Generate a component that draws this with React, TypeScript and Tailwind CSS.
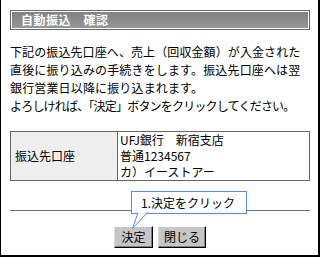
import React from 'react';

const App: React.FC = () => {
  return (
    <div className="relative w-[320px] h-[257px] overflow-hidden bg-white border-l border-r-2 border-b-2 border-black pl-[9px] pt-[10px] font-['Noto_Sans_CJK_JP',sans-serif] text-[12px] text-black">
      <div className="w-[300px] flex flex-col">
        {/* Title bar */}
        <div className="h-[20px] border border-[#666666] p-px bg-white">
          <div className="h-full flex items-center pl-[9px] bg-[radial-gradient(circle,#9a9a9a_0.6px,transparent_0.9px),linear-gradient(to_bottom,#545454,#8e8e8e)] bg-[length:2px_2px,100%_100%]">
            <span className="text-white font-bold leading-none tracking-[0.5px]">自動振込　確認</span>
          </div>
        </div>

        {/* Message */}
        <div className="mt-[13px] leading-[18px] whitespace-nowrap">
          <div className="tracking-[0.1px]">下記の振込先口座へ、売上（回収金額）が入金された</div>
          <div className="tracking-[0.15px]">直後に振り込みの手続きをします。振込先口座へは翌</div>
          <div className="tracking-[0.15px]">銀行営業日以降に振り込まれます。</div>
          <div className="tracking-[-0.8px]">よろしければ、「決定」ボタンをクリックしてください。</div>
        </div>

        {/* Account table */}
        <div className="mt-[16px] h-[50px] flex border border-[#666666]">
          <div className="w-[107px] shrink-0 flex items-center pl-[4px] bg-[#eeeeee] border-r border-[#666666]">
            振込先口座
          </div>
          <div className="flex-1 pl-[2px] leading-[16px] whitespace-nowrap">
            <div>UFJ銀行　新宿支店</div>
            <div>普通1234567</div>
            <div>カ）イーストアー</div>
          </div>
        </div>

        <div className="mt-[29px] border-t border-[#6e6e6e]" />

        {/* Buttons */}
        <div className="mt-[15px] flex justify-center gap-[5px]">
          <button className="w-[39px] h-[22px] flex items-center justify-center bg-[#c6c6c6] border border-t-white border-l-[#dcdcdc] border-r-black border-b-black shadow-[inset_-1px_-1px_0_#808080] leading-none">
            決定
          </button>
          <button className="w-[48px] h-[22px] flex items-center justify-center bg-[#c6c6c6] border border-t-white border-l-[#dcdcdc] border-r-black border-b-black shadow-[inset_-1px_-1px_0_#808080] leading-none">
            閉じる
          </button>
        </div>
      </div>

      {/* Callout */}
      <div className="absolute left-[130px] top-[191px] w-[116px] h-[23px] bg-white border border-[#5b87f0] flex items-center pl-[9px] leading-none whitespace-nowrap">
        1.決定をクリック
      </div>
      <svg className="absolute left-[129px] top-[212px]" width="20" height="18" viewBox="0 0 20 18">
        <polygon points="8,0 18,0 2.5,16.5" fill="white" />
        <polyline points="8,0.5 2.5,16.5 17.5,0.5" fill="none" stroke="#5b87f0" strokeWidth="1" />
      </svg>
    </div>
  );
};

export default App;
